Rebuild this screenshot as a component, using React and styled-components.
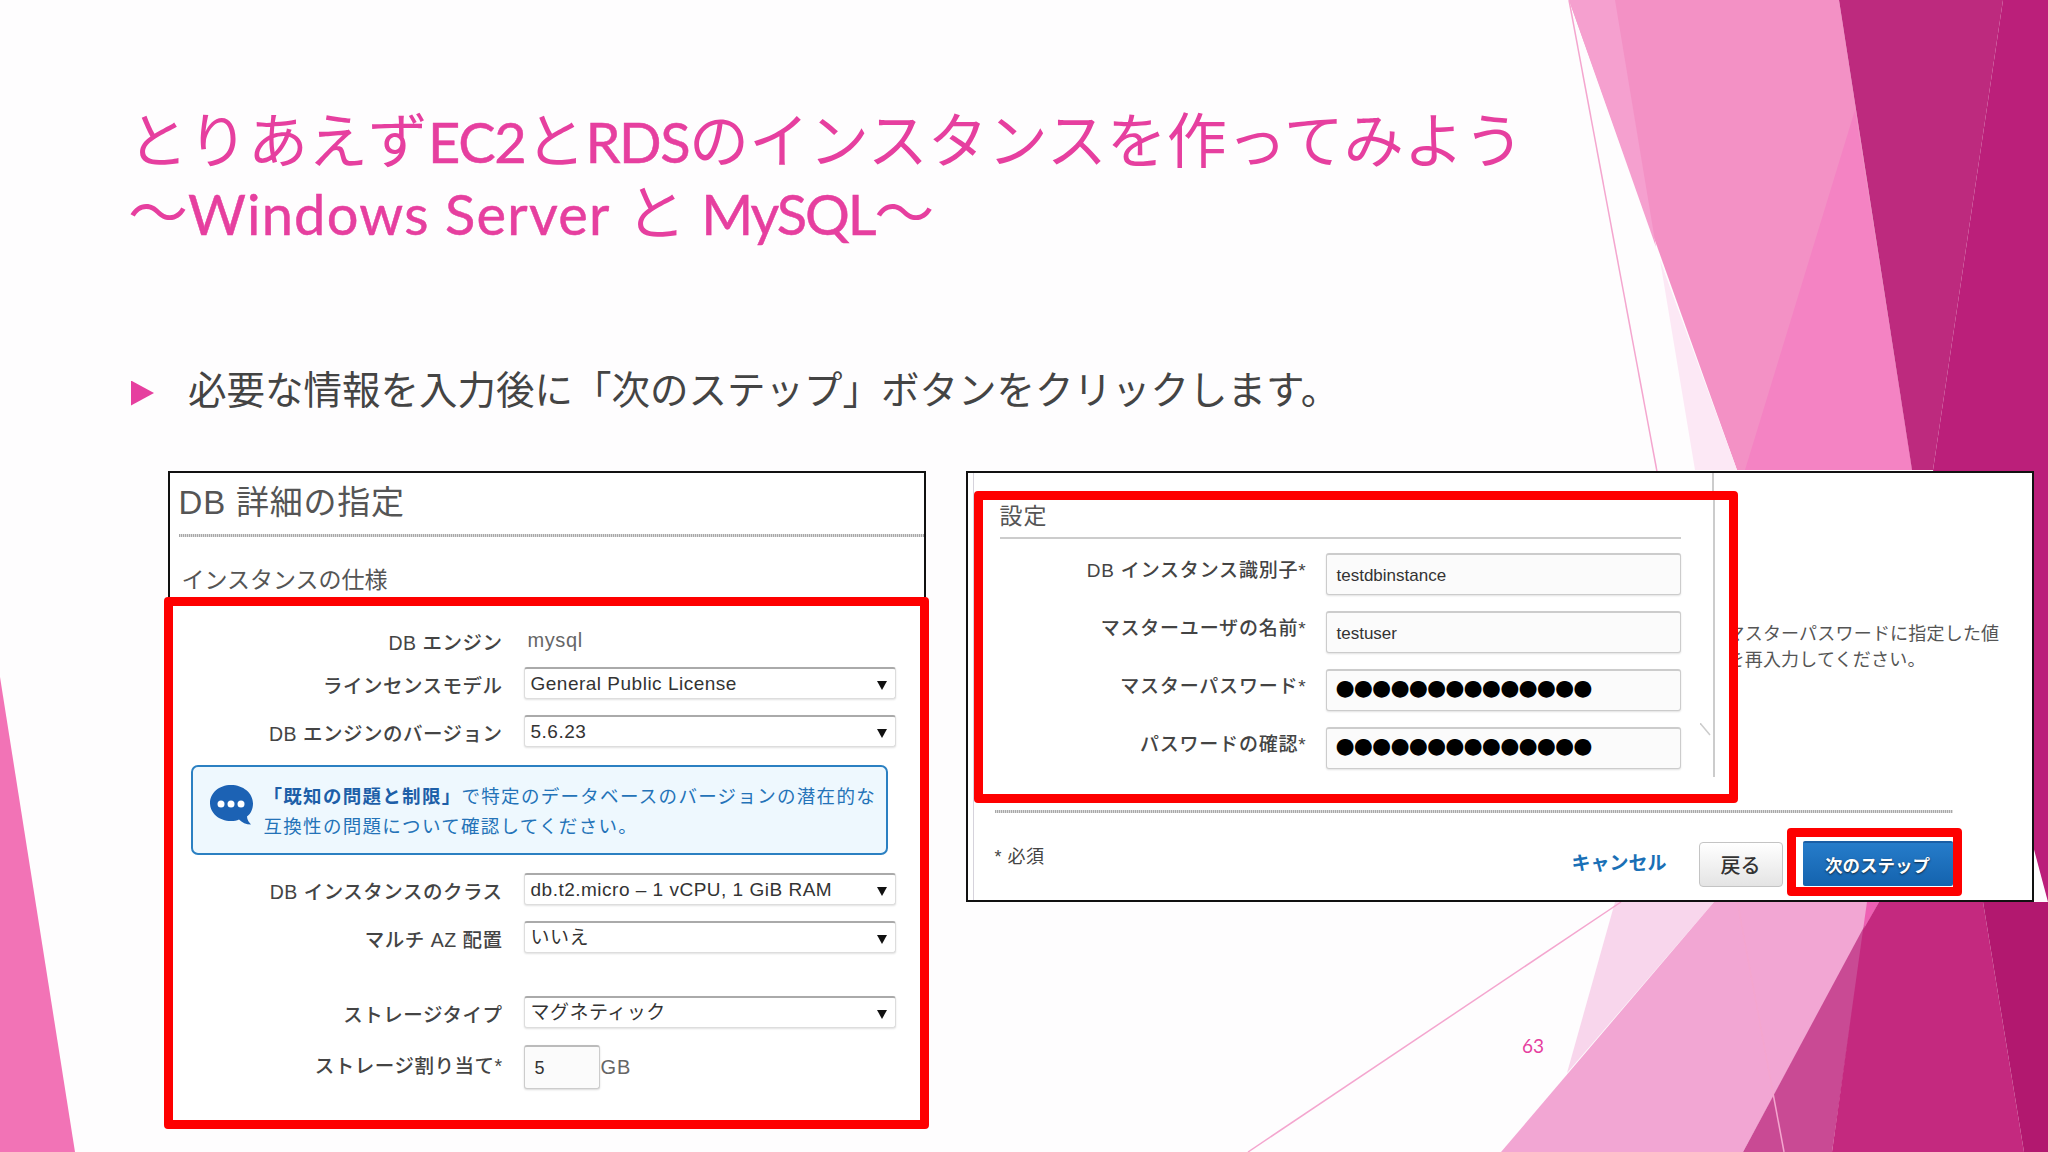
import styled, { createGlobalStyle } from 'styled-components'

const GlobalStyle = createGlobalStyle`
    html, body {
        margin: 0;
        padding: 0;
        background: #fefdfe;
    }
    * {
        box-sizing: border-box;
    }
`

const UI_FONT = `"Liberation Sans", "Noto Sans CJK JP", sans-serif`
const SLIDE_FONT = `Lato, "Noto Sans CJK JP", sans-serif`
const PINK = '#e63f9f'

const Slide = styled.div`
    position: relative;
    width: 2048px;
    height: 1152px;
    overflow: hidden;
    background: #fefdfe;
    font-family: ${UI_FONT};
`
const Backdrop = styled.svg`
    position: absolute;
    left: 0;
    top: 0;
`
const Header = styled.header`
    position: relative;
    height: 471px;
    padding: 105px 0 0 131px;
`
const Title = styled.h1`
    margin: 0 0 0 -3px;
    font-family: ${SLIDE_FONT};
    font-size: 60px;
    line-height: 70px;
    font-weight: 400;
    color: ${PINK};
    white-space: pre;
`
const Latin = styled.span`
    font-size: 56px;
    letter-spacing: ${(p) => p.$track}px;
    -webkit-text-stroke: 0.5px ${PINK};
`
const Bullet = styled.div`
    display: flex;
    align-items: center;
    gap: 34px;
    margin-top: 116px;
    font-family: ${SLIDE_FONT};
    font-size: 38.5px;
    line-height: 48px;
    color: #444;
`
const BulletMark = styled.span`
    width: 23px;
    height: 25px;
    margin-top: 8px;
    background: ${PINK};
    clip-path: polygon(0 0, 100% 50%, 0 100%);
`
const Shots = styled.main`
    position: relative;
    display: flex;
    align-items: flex-start;
    margin-left: 164px;
`
const LeftShot = styled.section`
    width: 765px;
    flex: none;
    margin-right: 37px;
`
const SpecHead = styled.div`
    height: 126px;
    margin: 0 3.5px;
    padding-left: 9px;
    background: #fff;
    border: 2px solid #111;
    border-bottom: none;
`
const ShotTitle = styled.h2`
    margin: 0;
    height: 61px;
    padding-top: 10px;
    font-size: 33px;
    line-height: 40px;
    font-weight: 400;
    letter-spacing: 0.8px;
    color: #555;
`
const HeadRule = styled.div`
    height: 3px;
    background: repeating-linear-gradient(90deg, #a8a8a8 0 1px, #ddd 1px 2px);
`
const SubTitle = styled.h3`
    margin: 0;
    padding: 28px 0 0 3px;
    font-size: 23px;
    line-height: 30px;
    font-weight: 400;
    color: #555;
`
const RedBox = styled.div`
    position: relative;
    z-index: 1;
    background: #fff;
    border: 9.5px solid #fe0000;
    border-radius: 4px;
`
const SpecForm = styled(RedBox)`
    height: 532px;
    padding-top: 18px;
`
const SpecRow = styled.div`
    display: grid;
    grid-template-columns: 329.5px 372px;
    column-gap: 21px;
    align-items: center;
    min-height: 32px;
    margin-top: ${(p) => p.$top || 0}px;
`
const SpecLabel = styled.label`
    padding-top: 5px;
    margin-bottom: ${(p) => p.$lift || 0}px;
    text-align: right;
    font-size: 19.5px;
    line-height: 26px;
    letter-spacing: 0.5px;
    font-weight: 500;
    color: #444;
`
const StaticValue = styled.span`
    padding-left: 4px;
    font-size: 20px;
    letter-spacing: 0.6px;
    color: #666;
`
const Select = styled.div`
    position: relative;
    height: 32px;
    padding-left: 6px;
    font-size: 19px;
    line-height: 30px;
    letter-spacing: 0.5px;
    white-space: nowrap;
    color: #333;
    background: #fff;
    border: 1px solid #ddd;
    border-top: 2px solid #aaa;
    border-radius: 3px;
    box-shadow: 0 1px 2px rgba(0, 0, 0, 0.12);

    &::after {
        content: '';
        position: absolute;
        right: 8px;
        top: 12px;
        border: 5.5px solid transparent;
        border-top: 9px solid #111;
        border-bottom: none;
    }
`
const Notice = styled.div`
    display: flex;
    gap: 11px;
    height: 90px;
    margin: 18px 0 0 17.5px;
    width: 697px;
    padding: 17px 0 0 16px;
    background: #eef8fe;
    border: 2px solid #2b80c2;
    border-radius: 7px;
`
const NoticeText = styled.p`
    margin: -2px 0 0;
    font-size: 18.5px;
    line-height: 30px;
    letter-spacing: 1.3px;
    white-space: nowrap;
    color: #2473b8;

    b {
        color: #1d5fa8;
    }
`
const AmountRow = styled.div`
    display: flex;
    align-items: center;
`
const Amount = styled.div`
    width: 76px;
    height: 44px;
    padding-left: 10px;
    font-size: 18px;
    line-height: 42px;
    color: #333;
    background: #fbfbfb;
    border: 1px solid #ccc;
    border-top: 2px solid #bbb;
    border-radius: 3px;
    box-shadow: 0 1px 2px rgba(0, 0, 0, 0.15);
`
const Unit = styled.span`
    margin-left: 1px;
    font-size: 20px;
    letter-spacing: 1px;
    color: #666;
`
const RightColumn = styled.div`
    width: 1068px;
    flex: none;
`
const RightShot = styled.section`
    height: 431px;
    background: #fff;
    border: 2px solid #111;
`
const ShotBody = styled.div`
    position: relative;
    height: 100%;
    margin-left: 4.5px;
    padding-top: 17.5px;
    border-left: 1px solid #d6d3dc;

    &::before {
        content: '';
        position: absolute;
        left: 738px;
        top: 0;
        width: 2px;
        height: 20px;
        background: #ccc;
    }
`
const SettingsRow = styled.div`
    display: flex;
    align-items: flex-start;
`
const SettingsBox = styled(RedBox)`
    flex: none;
    width: 764px;
    height: 312px;
    padding: 0 0 0 17px;
    border-width: 9px;

    &::after {
        content: '';
        position: absolute;
        left: 730px;
        top: 0;
        width: 2px;
        height: 277px;
        background: #ccc;
    }
`
const Stray = styled.svg`
    position: absolute;
    left: 717px;
    top: 223px;
`
const SettingsTitle = styled.h3`
    width: 681px;
    height: 39px;
    margin: 0;
    padding-top: 1px;
    font-size: 23px;
    line-height: 30px;
    letter-spacing: 1px;
    font-weight: 400;
    color: #555;
    border-bottom: 2px solid #ccc;
`
const FieldList = styled.div`
    display: grid;
    grid-template-columns: 307px 355px;
    column-gap: 19px;
    row-gap: 16px;
    margin-top: 14px;
`
const FieldLabel = styled.label`
    padding-top: 3px;
    text-align: right;
    font-size: 19px;
    line-height: 30px;
    letter-spacing: 0.8px;
    font-weight: 500;
    color: #444;
`
const Field = styled.div`
    height: 42px;
    padding-left: 10px;
    font-size: 17px;
    line-height: 42px;
    color: #333;
    background: #fbfbfb;
    border: 1px solid #ccc;
    border-top: 2px solid #ccc;
    border-radius: 3px;
    box-shadow: 0 1px 2px rgba(0, 0, 0, 0.12);
`
const Secret = styled(Field)`
    padding-left: 9px;
    font-family: "DejaVu Sans", sans-serif;
    font-size: 22px;
    line-height: 34px;
    letter-spacing: -0.9px;
    white-space: nowrap;
    color: #000;
`
const Help = styled.p`
    margin: 130px 0 0 -11px;
    font-size: 18px;
    line-height: 26px;
    letter-spacing: 0.2px;
    white-space: nowrap;
    color: #555;
`
const DottedRule = styled.div`
    height: 3px;
    width: 958px;
    margin: 7px 0 0 21px;
    background: repeating-linear-gradient(90deg, #a8a8a8 0 1px, #ddd 1px 2px);
`
const Footer = styled.div`
    display: flex;
    align-items: flex-start;
    width: 967px;
    margin: 15px 0 0 21px;
`
const Required = styled.span`
    margin: 15px auto 0 0;
    font-size: 18px;
    line-height: 28px;
    letter-spacing: 0.5px;
    color: #444;
`
const CancelLink = styled.a`
    margin: 22px 32px 0 0;
    font-size: 19px;
    line-height: 28px;
    font-weight: 700;
    color: #1a70b6;
`
const BackButton = styled.button`
    width: 84px;
    height: 45px;
    margin: 14px 4px 0 0;
    padding: 0;
    font-family: ${UI_FONT};
    font-size: 20px;
    font-weight: 500;
    color: #333;
    background: linear-gradient(#fff, #e4e4e4);
    border: 1px solid #c4c4c4;
    border-radius: 4px;
`
const NextFrame = styled(RedBox)`
    width: 175px;
    height: 68px;
    padding: 4px 0 0 7px;
    border-width: 9.5px 9px;
`
const NextButton = styled.button`
    display: block;
    width: 150px;
    height: 45px;
    padding: 0;
    font-family: ${UI_FONT};
    font-size: 17.5px;
    font-weight: 700;
    color: #fff;
    text-shadow: 0 1px 2px #123;
    background: linear-gradient(#267cca, #1463ae);
    border: none;
    border-top: 2px solid #1a5ea5;
    border-radius: 2px;
`
const PageNumber = styled.div`
    margin: 131px 0 0 556px;
    font-family: Lato, sans-serif;
    font-size: 19px;
    line-height: 26px;
    color: ${PINK};
`

const shapes = [
    ['#f391c5', '1569,0 1839,0 1912,470 1737,470'],
    ['#f5a0cf', '1569,0 1615,0 1656,247'],
    ['#f483c3', '1855,110 1912,470 1745,470'],
    ['#bd2a7e', '1839,0 2003,0 1933,470 1912,470'],
    ['#bb1f7a', '2003,0 2048,0 2048,902 1933,470'],
    ['#fce8f5', '1660,260 1695,470 1737,470'],
    ['#f8d6ec', '1615,902 1714,902 1567,1073'],
    ['#f2a6d3', '1714,902 1879,902 1743,1152 1501,1152'],
    ['#ee5fb3', '1867,902 1879,902 1863,930'],
    ['#c94a94', '1865,925 1743,1152 1832,1152'],
    ['#c4297f', '1879,902 1983,902 2024,1152 1832,1152 1863,930'],
    ['#b2186f', '1983,902 2048,902 2048,1152 2024,1152'],
    ['#f273b6', '0,677 75,1152 0,1152'],
]

const ChatBubble = () => (
    <svg width="44" height="42" viewBox="0 0 44 42">
        <path d="M22 1C10 1 1 9 1 19s9 18 21 18c3 0 6-.5 8-1.500 3 3 7 5 12 5-2-2-4-5-4-8 4-3 6-8 6-13C44 9 34 1 22 1z" fill="#1c62b4" />
        <circle cx="12" cy="20" r="3.500" fill="#fff" />
        <circle cx="22" cy="20" r="3.500" fill="#fff" />
        <circle cx="32" cy="20" r="3.500" fill="#fff" />
    </svg>
)

const MASK = '●'.repeat(14)

export default function App() {
    return (
        <Slide>
            <GlobalStyle />
            <Backdrop width="2048" height="1152" viewBox="0 0 2048 1152">
                {shapes.map(([fill, points]) => (
                    <polygon key={points} fill={fill} points={points} />
                ))}
                <line x1="1569" y1="0" x2="1784" y2="1152" stroke="#f4a6cf" strokeWidth="1.500" />
                <line x1="1621" y1="902" x2="1248" y2="1152" stroke="#f4a6cf" strokeWidth="1.500" />
            </Backdrop>
            <Header>
                <Title>
                    とりあえず<Latin $track={-1.3}>EC2</Latin>と<Latin $track={-1.5}>RDS</Latin>のインスタンスを作ってみよう
                    <br />
                    ～<Latin $track={1.2}>Windows Server</Latin> と <Latin $track={-2.2}>MySQL</Latin>～
                </Title>
                <Bullet>
                    <BulletMark />
                    必要な情報を入力後に「次のステップ」ボタンをクリックします。
                </Bullet>
            </Header>
            <Shots>
                <LeftShot>
                    <SpecHead>
                        <ShotTitle>DB 詳細の指定</ShotTitle>
                        <HeadRule />
                        <SubTitle>インスタンスの仕様</SubTitle>
                    </SpecHead>
                    <SpecForm>
                        <SpecRow>
                            <SpecLabel>DB エンジン</SpecLabel>
                            <StaticValue>mysql</StaticValue>
                        </SpecRow>
                        <SpecRow $top={11}>
                            <SpecLabel>ラインセンスモデル</SpecLabel>
                            <Select>General Public License</Select>
                        </SpecRow>
                        <SpecRow $top={16}>
                            <SpecLabel>DB エンジンのバージョン</SpecLabel>
                            <Select>5.6.23</Select>
                        </SpecRow>
                        <Notice>
                            <ChatBubble />
                            <NoticeText>
                                <b>「既知の問題と制限」</b>で特定のデータベースのバージョンの潜在的な
                                <br />
                                互換性の問題について確認してください。
                            </NoticeText>
                        </Notice>
                        <SpecRow $top={18}>
                            <SpecLabel>DB インスタンスのクラス</SpecLabel>
                            <Select>db.t2.micro – 1 vCPU, 1 GiB RAM</Select>
                        </SpecRow>
                        <SpecRow $top={16}>
                            <SpecLabel>マルチ AZ 配置</SpecLabel>
                            <Select>いいえ</Select>
                        </SpecRow>
                        <SpecRow $top={43}>
                            <SpecLabel>ストレージタイプ</SpecLabel>
                            <Select>マグネティック</Select>
                        </SpecRow>
                        <SpecRow $top={17}>
                            <SpecLabel $lift={8}>ストレージ割り当て*</SpecLabel>
                            <AmountRow>
                                <Amount>5</Amount>
                                <Unit>GB</Unit>
                            </AmountRow>
                        </SpecRow>
                    </SpecForm>
                </LeftShot>
                <RightColumn>
                    <RightShot>
                        <ShotBody>
                            <SettingsRow>
                                <SettingsBox>
                                    <SettingsTitle>設定</SettingsTitle>
                                    <FieldList>
                                        <FieldLabel>DB インスタンス識別子*</FieldLabel>
                                        <Field>testdbinstance</Field>
                                        <FieldLabel>マスターユーザの名前*</FieldLabel>
                                        <Field>testuser</Field>
                                        <FieldLabel>マスターパスワード*</FieldLabel>
                                        <Secret>{MASK}</Secret>
                                        <FieldLabel>パスワードの確認*</FieldLabel>
                                        <Secret>{MASK}</Secret>
                                    </FieldList>
                                    <Stray width="11" height="13" viewBox="0 0 11 13">
                                        <line x1="0" y1="0" x2="10" y2="12" stroke="#ccc" strokeWidth="1.500" />
                                    </Stray>
                                </SettingsBox>
                                <Help>
                                    マスターパスワードに指定した値
                                    <br />
                                    を再入力してください。
                                </Help>
                            </SettingsRow>
                            <DottedRule />
                            <Footer>
                                <Required>* 必須</Required>
                                <CancelLink>キャンセル</CancelLink>
                                <BackButton>戻る</BackButton>
                                <NextFrame>
                                    <NextButton>次のステップ</NextButton>
                                </NextFrame>
                            </Footer>
                        </ShotBody>
                    </RightShot>
                    <PageNumber>63</PageNumber>
                </RightColumn>
            </Shots>
        </Slide>
    )
}
